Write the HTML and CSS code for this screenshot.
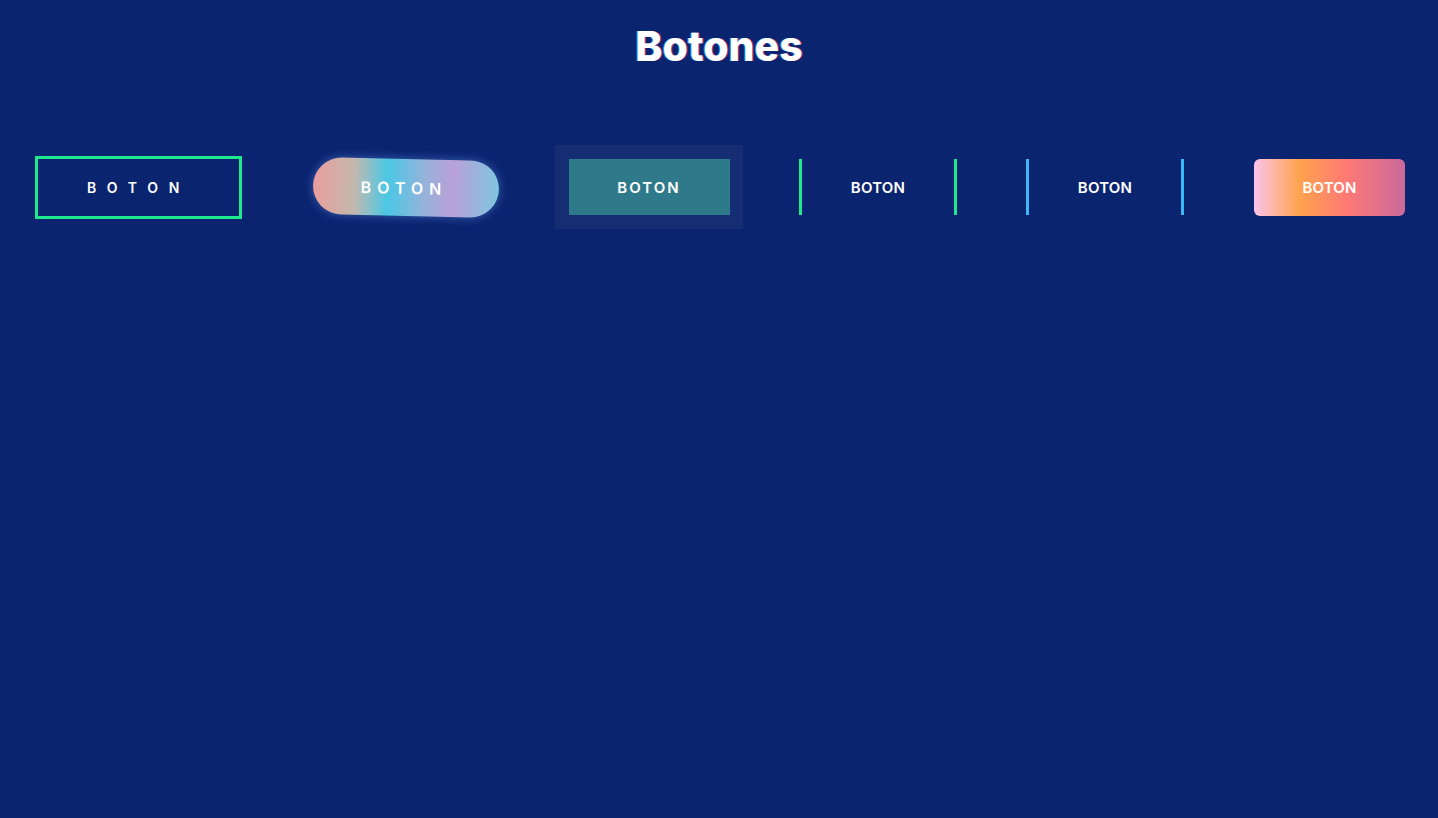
FILE: index.html
```html
<!DOCTYPE html>
<html lang="es">
<head>
<meta charset="utf-8">
<title>Botones</title>
<link rel="stylesheet" href="styles.css">
</head>
<body>
<h1 class="title">Botones</h1>
<div class="row">
  <button class="btn btn-outline">BOTON</button>
  <button class="btn btn-pill">BOTON</button>
  <div class="box"><button class="btn btn-teal">BOTON</button></div>
  <button class="btn btn-lines btn-green">BOTON</button>
  <button class="btn btn-lines btn-blue">BOTON</button>
  <button class="btn btn-sunset">BOTON</button>
</div>
</body>
</html>
```
FILE: styles.css
```css
html, body {
  margin: 0;
  padding: 0;
  background: #0b2470;
  height: 100%;
  overflow: hidden;
}
body {
  font-family: "Inter", "Lato", sans-serif;
  color: #fff;
}
.title {
  margin: 0;
  padding-top: 20px;
  text-align: center;
  font-size: 41px;
  font-weight: 800;
  line-height: 52px;
  letter-spacing: 0;
  color: #fff;
  text-shadow: -1px 0 0 rgba(40, 190, 255, 0.6), 1px 0 0 rgba(255, 50, 90, 0.6);
}
.row {
  display: flex;
  align-items: center;
  padding-left: 35px;
  margin-top: 73px;
  height: 84px;
}
.btn {
  font-family: "Inter", "Lato", sans-serif;
  color: #fff;
  background: none;
  border: none;
  padding: 0;
  margin: 0;
  cursor: pointer;
  display: flex;
  align-items: center;
  justify-content: center;
  box-sizing: border-box;
}
.btn-outline {
  width: 207px;
  height: 63px;
  border: 3px solid #1ee88c;
  font-size: 14px;
  font-weight: 600;
  letter-spacing: 10.7px;
  margin-right: 71px;
}
.btn-pill {
  width: 186px;
  height: 57px;
  border-radius: 30px;
  background: linear-gradient(90deg, #ea9d9c 0%, #c4b8ae 22%, #4ac8e5 40%, #96b2da 60%, #b9a0d8 75%, #7fc6df 100%);
  box-shadow: 0 0 10px rgba(110, 170, 255, 0.45);
  transform: rotate(1.3deg);
  font-size: 16px;
  font-weight: 600;
  letter-spacing: 6px;
  padding-right: 4px;
  margin-right: 56px;
}
.box {
  width: 188px;
  height: 84px;
  background: #152d73;
  display: flex;
  align-items: center;
  justify-content: center;
  margin-right: 56px;
}
.btn-teal {
  width: 161px;
  height: 56px;
  background: #2f7a8a;
  font-size: 15px;
  font-weight: 600;
  letter-spacing: 2px;
}
.btn-lines {
  width: 158px;
  height: 56px;
  font-size: 15px;
  font-weight: 600;
  letter-spacing: 0.2px;
}
.btn-green {
  border-left: 3px solid #1ee88c;
  border-right: 3px solid #1ee88c;
  margin-right: 69px;
}
.btn-blue {
  border-left: 3px solid #3cb9f6;
  border-right: 3px solid #3cb9f6;
  margin-right: 70px;
}
.btn-sunset {
  width: 151px;
  height: 57px;
  border-radius: 6px;
  background: linear-gradient(90deg, #fbc4eb 0%, #ffa34d 30%, #ff7a73 60%, #c96a9c 100%);
  font-size: 15px;
  font-weight: 600;
  letter-spacing: 0.1px;
}
```
